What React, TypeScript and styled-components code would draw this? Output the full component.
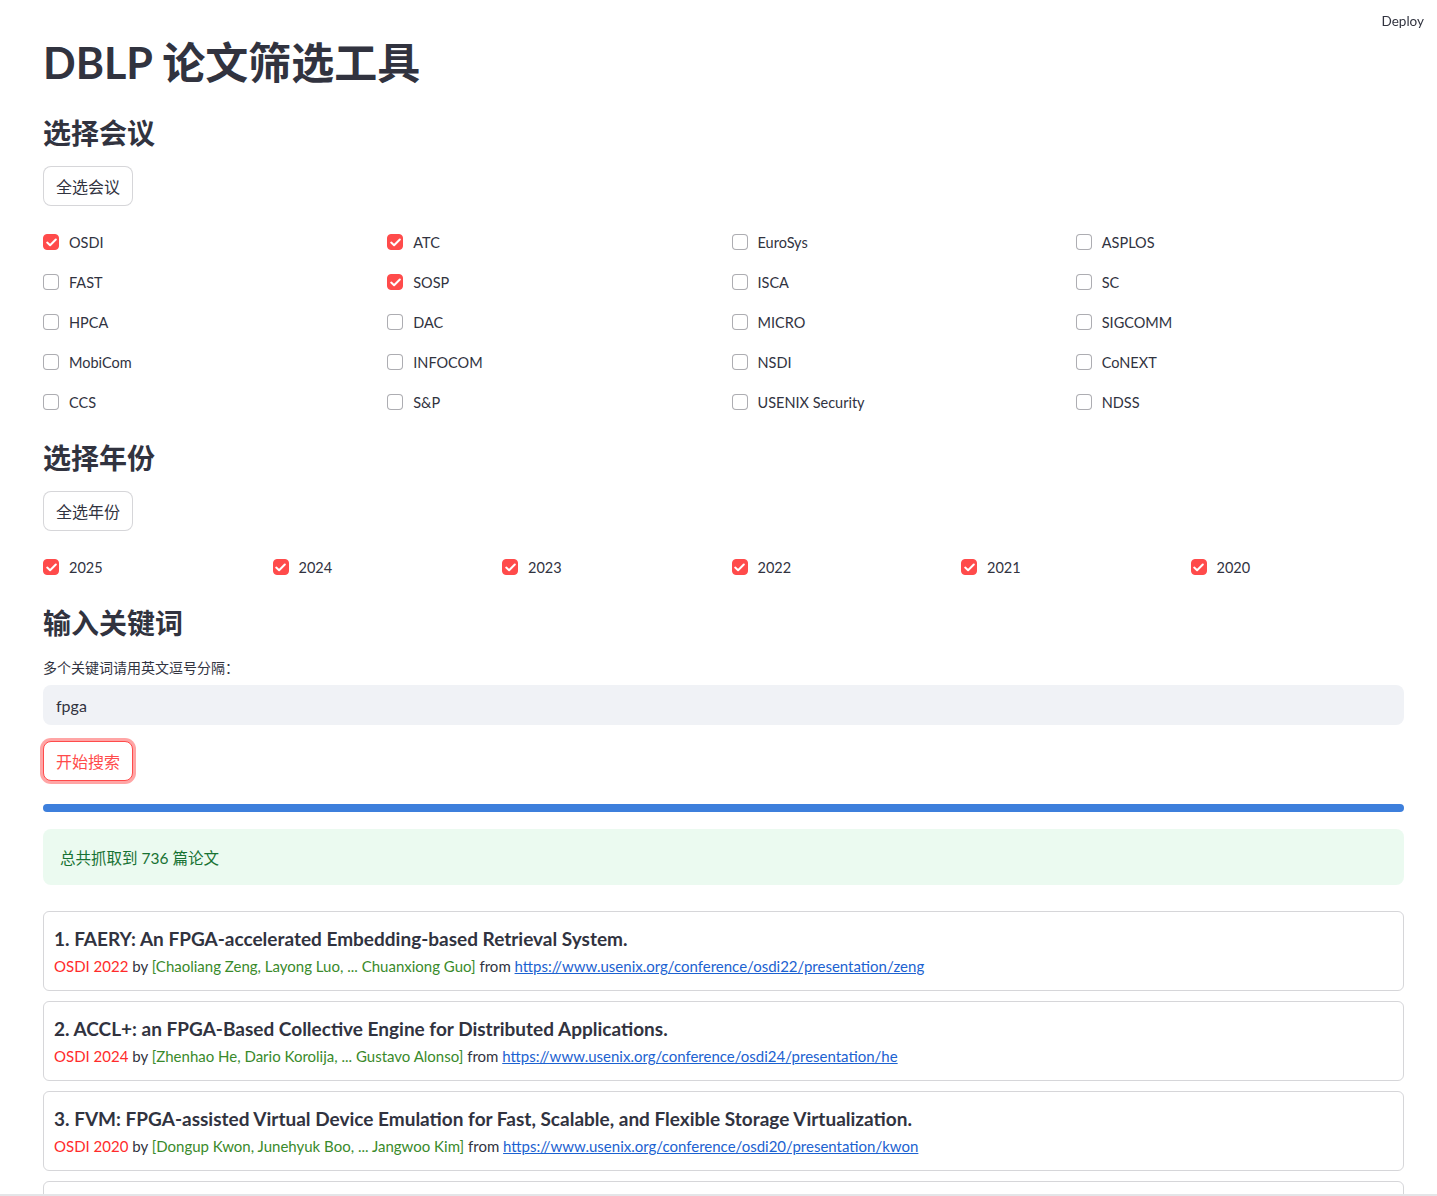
import React from "react";
import styled, { createGlobalStyle } from "styled-components";

const FONT = `Lato, "Noto Sans CJK SC", sans-serif`;

const GlobalStyle = createGlobalStyle`
  html, body { margin: 0; padding: 0; background: #ffffff; }
  body { font-family: ${FONT}; color: #31333f; -webkit-font-smoothing: antialiased; }
  * { box-sizing: border-box; }
`;

const Header = styled.header`
  position: fixed;
  top: 0;
  left: 0;
  right: 0;
  height: 42px;
  display: flex;
  align-items: center;
  justify-content: flex-end;
  padding-right: 13px;
  background: transparent;
  z-index: 10;
`;

const DeployLink = styled.span`
  font-size: 13.5px;
  color: #31333f;
`;

const Main = styled.main`
  padding: 36px 33px 0 43px;
  display: flex;
  flex-direction: column;
`;

const Title = styled.h1`
  margin: 0;
  font-size: 43px;
  line-height: 53px;
  font-weight: 700;
  color: #31333f;
`;

const SectionTitle = styled.h3<{ $top: number }>`
  margin: ${(p) => p.$top}px 0 0;
  font-size: 28px;
  line-height: 34px;
  font-weight: 700;
  color: #31333f;
`;

const SecondaryButton = styled.button<{ $active?: boolean }>`
  align-self: flex-start;
  margin-top: 16px;
  height: 40px;
  padding: 0 12px;
  border-radius: 8px;
  border: 1px solid ${(p) => (p.$active ? "#ff4b4b" : "rgba(49, 51, 63, 0.2)")};
  box-shadow: ${(p) => (p.$active ? "0 0 0 3px rgba(255, 75, 75, 0.5)" : "none")};
  background: #ffffff;
  color: ${(p) => (p.$active ? "#ff4b4b" : "#31333f")};
  font-family: ${FONT};
  font-size: 16px;
  cursor: pointer;
`;

const CheckGrid = styled.div<{ $cols: number }>`
  margin-top: 16px;
  display: grid;
  grid-template-columns: repeat(${(p) => p.$cols}, 1fr);
  column-gap: 16px;
`;

const CheckRow = styled.label`
  height: 40px;
  display: flex;
  align-items: center;
  gap: 10px;
  font-size: 14.5px;
  color: #31333f;
  cursor: pointer;
`;

const Box = styled.span<{ $checked: boolean }>`
  width: 16px;
  height: 16px;
  flex: none;
  border-radius: 4px;
  display: flex;
  align-items: center;
  justify-content: center;
  background: ${(p) => (p.$checked ? "#ff4b4b" : "#ffffff")};
  border: 1px solid ${(p) => (p.$checked ? "#ff4b4b" : "rgba(49, 51, 63, 0.4)")};
`;

const FieldLabel = styled.div`
  margin-top: 17px;
  font-size: 14px;
  line-height: 22px;
  color: #31333f;
`;

const TextInput = styled.div`
  margin-top: 6px;
  height: 40px;
  border-radius: 8px;
  background: #f0f2f6;
  display: flex;
  align-items: center;
  padding: 0 13px;
  font-size: 16px;
  color: #31333f;
`;

const Progress = styled.div`
  margin-top: 23px;
  height: 8px;
  border-radius: 4px;
  background: #3d7fdc;
`;

const SuccessBox = styled.div`
  margin-top: 17px;
  height: 56px;
  border-radius: 8px;
  background: rgba(33, 195, 84, 0.09);
  color: #177233;
  display: flex;
  align-items: center;
  padding: 0 17px;
  font-size: 15.5px;
`;

const CardList = styled.div`
  margin-top: 26px;
  display: flex;
  flex-direction: column;
  gap: 10px;
`;

const Card = styled.div`
  border: 1px solid rgba(49, 51, 63, 0.2);
  border-radius: 6px;
  padding: 13px 10px 10px;
  min-height: 79px;
`;

const CardTitle = styled.div`
  font-size: 19px;
  line-height: 28px;
  font-weight: 700;
  color: #31333f;
`;

const Meta = styled.div`
  font-size: 15px;
  line-height: 27px;
  color: #31333f;
`;

const Venue = styled.span`
  color: #ff2b2b;
`;

const Authors = styled.span`
  color: #3a8a2b;
`;

const Link = styled.a`
  color: #1c62d1;
  text-decoration: underline;
`;

const BottomEdge = styled.div`
  position: fixed;
  left: 0;
  right: 0;
  bottom: 0;
  height: 2px;
  background: #e4e5e8;
  z-index: 10;
`;

const Check = () => (
  <svg width="11" height="9" viewBox="0 0 11 9" fill="none">
    <path d="M1.2 4.6 L4.1 7.3 L9.8 1.5" stroke="#ffffff" strokeWidth="2" strokeLinecap="round" strokeLinejoin="round" />
  </svg>
);

const CheckItem = ({ label, checked }: { label: string; checked: boolean }) => (
  <CheckRow>
    <Box $checked={checked}>{checked && <Check />}</Box>
    {label}
  </CheckRow>
);

const conferences: [string, boolean][] = [
  ["OSDI", true], ["ATC", true], ["EuroSys", false], ["ASPLOS", false],
  ["FAST", false], ["SOSP", true], ["ISCA", false], ["SC", false],
  ["HPCA", false], ["DAC", false], ["MICRO", false], ["SIGCOMM", false],
  ["MobiCom", false], ["INFOCOM", false], ["NSDI", false], ["CoNEXT", false],
  ["CCS", false], ["S&P", false], ["USENIX Security", false], ["NDSS", false],
];

const years = ["2025", "2024", "2023", "2022", "2021", "2020"];

const papers = [
  {
    title: "1. FAERY: An FPGA-accelerated Embedding-based Retrieval System.",
    venue: "OSDI 2022",
    authors: "[Chaoliang Zeng, Layong Luo, ... Chuanxiong Guo]",
    url: "https://www.usenix.org/conference/osdi22/presentation/zeng",
  },
  {
    title: "2. ACCL+: an FPGA-Based Collective Engine for Distributed Applications.",
    venue: "OSDI 2024",
    authors: "[Zhenhao He, Dario Korolija, ... Gustavo Alonso]",
    url: "https://www.usenix.org/conference/osdi24/presentation/he",
  },
  {
    title: "3. FVM: FPGA-assisted Virtual Device Emulation for Fast, Scalable, and Flexible Storage Virtualization.",
    venue: "OSDI 2020",
    authors: "[Dongup Kwon, Junehyuk Boo, ... Jangwoo Kim]",
    url: "https://www.usenix.org/conference/osdi20/presentation/kwon",
  },
];

export default function App() {
  return (
    <>
      <GlobalStyle />
      <Header>
        <DeployLink>Deploy</DeployLink>
      </Header>
      <Main>
        <Title>DBLP 论文筛选工具</Title>

        <SectionTitle $top={27}>选择会议</SectionTitle>
        <SecondaryButton>全选会议</SecondaryButton>
        <CheckGrid $cols={4}>
          {conferences.map(([name, checked]) => (
            <CheckItem key={name} label={name} checked={checked} />
          ))}
        </CheckGrid>

        <SectionTitle $top={19}>选择年份</SectionTitle>
        <SecondaryButton>全选年份</SecondaryButton>
        <CheckGrid $cols={6}>
          {years.map((y) => (
            <CheckItem key={y} label={y} checked />
          ))}
        </CheckGrid>

        <SectionTitle $top={19}>输入关键词</SectionTitle>
        <FieldLabel>多个关键词请用英文逗号分隔：</FieldLabel>
        <TextInput>fpga</TextInput>
        <SecondaryButton $active>开始搜索</SecondaryButton>

        <Progress />
        <SuccessBox>总共抓取到 736 篇论文</SuccessBox>

        <CardList>
          {papers.map((p) => (
            <Card key={p.title}>
              <CardTitle>{p.title}</CardTitle>
              <Meta>
                <Venue>{p.venue}</Venue> by <Authors>{p.authors}</Authors> from{" "}
                <Link href={p.url}>{p.url}</Link>
              </Meta>
            </Card>
          ))}
          <Card />
        </CardList>
      </Main>
      <BottomEdge />
    </>
  );
}
